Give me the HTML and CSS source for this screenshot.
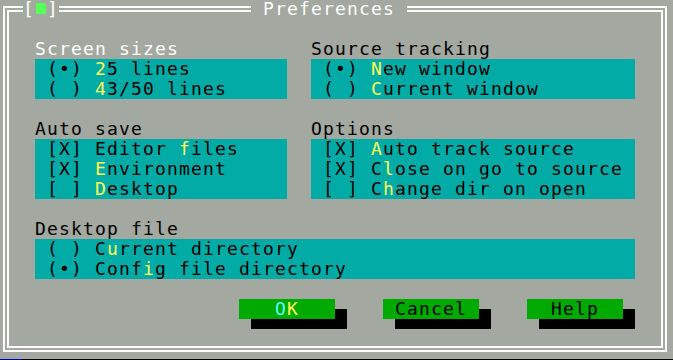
FILE: index.html
```html
<!DOCTYPE html>
<html lang="en">
<head>
    <meta charset="UTF-8">
    <meta name="viewport" content="width=device-width, initial-scale=1.0">
    <title>Preferences</title>
    <link rel="stylesheet" href="styles.css">
</head>
<body>
<div class="screen">
    <div class="dialog">
        <!-- title bar sits on the top frame line -->
        <div class="titlebar">
            <span class="close"><span class="cell">[</span><span class="cell"><span class="close-box"></span></span><span class="cell">]</span></span>
            <span class="title"> Preferences </span>
        </div>

        <div class="content">
            <div class="pair">
                <div class="group narrow">
                    <div class="label focused">Screen sizes</div>
                    <div class="cluster">
                        <div class="item"> (•) <span class="hot">2</span>5 lines</div>
                        <div class="item"> ( ) <span class="hot">4</span>3/50 lines</div>
                    </div>
                </div>
                <div class="group wide">
                    <div class="label">Source tracking</div>
                    <div class="cluster">
                        <div class="item"> (•) <span class="hot">N</span>ew window</div>
                        <div class="item"> ( ) <span class="hot">C</span>urrent window</div>
                    </div>
                </div>
            </div>

            <div class="pair">
                <div class="group narrow">
                    <div class="label">Auto save</div>
                    <div class="cluster">
                        <div class="item"> [X] Editor <span class="hot">f</span>iles</div>
                        <div class="item"> [X] <span class="hot">E</span>nvironment</div>
                        <div class="item"> [ ] <span class="hot">D</span>esktop</div>
                    </div>
                </div>
                <div class="group wide">
                    <div class="label">Options</div>
                    <div class="cluster">
                        <div class="item"> [X] <span class="hot">A</span>uto track source</div>
                        <div class="item"> [X] C<span class="hot">l</span>ose on go to source</div>
                        <div class="item"> [ ] C<span class="hot">h</span>ange dir on open</div>
                    </div>
                </div>
            </div>

            <div class="group full">
                <div class="label">Desktop file</div>
                <div class="cluster">
                    <div class="item"> ( ) C<span class="hot">u</span>rrent directory</div>
                    <div class="item"> (•) Conf<span class="hot">i</span>g file directory</div>
                </div>
            </div>

            <div class="buttons">
                <div class="button default">   <span class="hot-def">O</span><span class="hot">K</span>   </div>
                <div class="button"> Cancel </div>
                <div class="button">  Help  </div>
            </div>
        </div>
    </div>
    <div class="status"><span class="status-blue"></span></div>
</div>
</body>
</html>
```

FILE: styles.css
```css
* {
    margin: 0;
    padding: 0;
    box-sizing: border-box;
}

body {
    background: #a3a8a1;
    font-family: 'DejaVu Sans Mono', 'Liberation Mono', monospace;
    font-size: 18px;
    letter-spacing: 1.16px;
    line-height: 20px;
    color: #000;
    overflow: hidden;
}

.screen {
    width: 673px;
    height: 360px;
    padding: 6px 0 0 3px;
    display: flex;
    flex-direction: column;
}

/* double frame */
.dialog {
    width: 664px;
    height: 346px;
    border: 6px double #fff;
}

.titlebar {
    display: flex;
    height: 18px;
    line-height: 18px;
    margin-top: -12px;
    margin-bottom: 1px;
    padding-left: 14px;
    color: #fff;
    white-space: pre;
}

.close {
    display: flex;
    background: #a3a8a1;
}

.cell {
    width: 12px;
    height: 18px;
    display: flex;
    align-items: center;
    justify-content: center;
}

.close-box {
    width: 10px;
    height: 11px;
    margin-top: -1px;
    background: #55ff55;
}

.title {
    margin-left: 192px;
    background: #a3a8a1;
}

.content {
    display: flex;
    flex-direction: column;
    gap: 20px;
    padding: 20px 0 0 26px;
}

.pair {
    display: flex;
    gap: 24px;
}

.group.narrow { width: 252px; }
.group.wide { width: 324px; }
.group.full { width: 600px; }

.label {
    height: 20px;
    white-space: pre;
}

.label.focused {
    color: #fff;
}

.cluster {
    background: #02aba6;
}

.item {
    height: 20px;
    white-space: pre;
}

.hot {
    color: #ffff55;
}

.hot-def {
    color: #55ffff;
}

/* buttons */
.buttons {
    display: flex;
    gap: 48px;
    padding-left: 204px;
}

.button {
    width: 96px;
    height: 20px;
    background: #00aa00;
    white-space: pre;
    box-shadow: 12px 10px 0 #000;
}

.status {
    display: flex;
    height: 1px;
    margin: 7px 0 0 -3px;
    background: #000;
}

.status-blue {
    width: 22px;
    background: #0000aa;
}
```
